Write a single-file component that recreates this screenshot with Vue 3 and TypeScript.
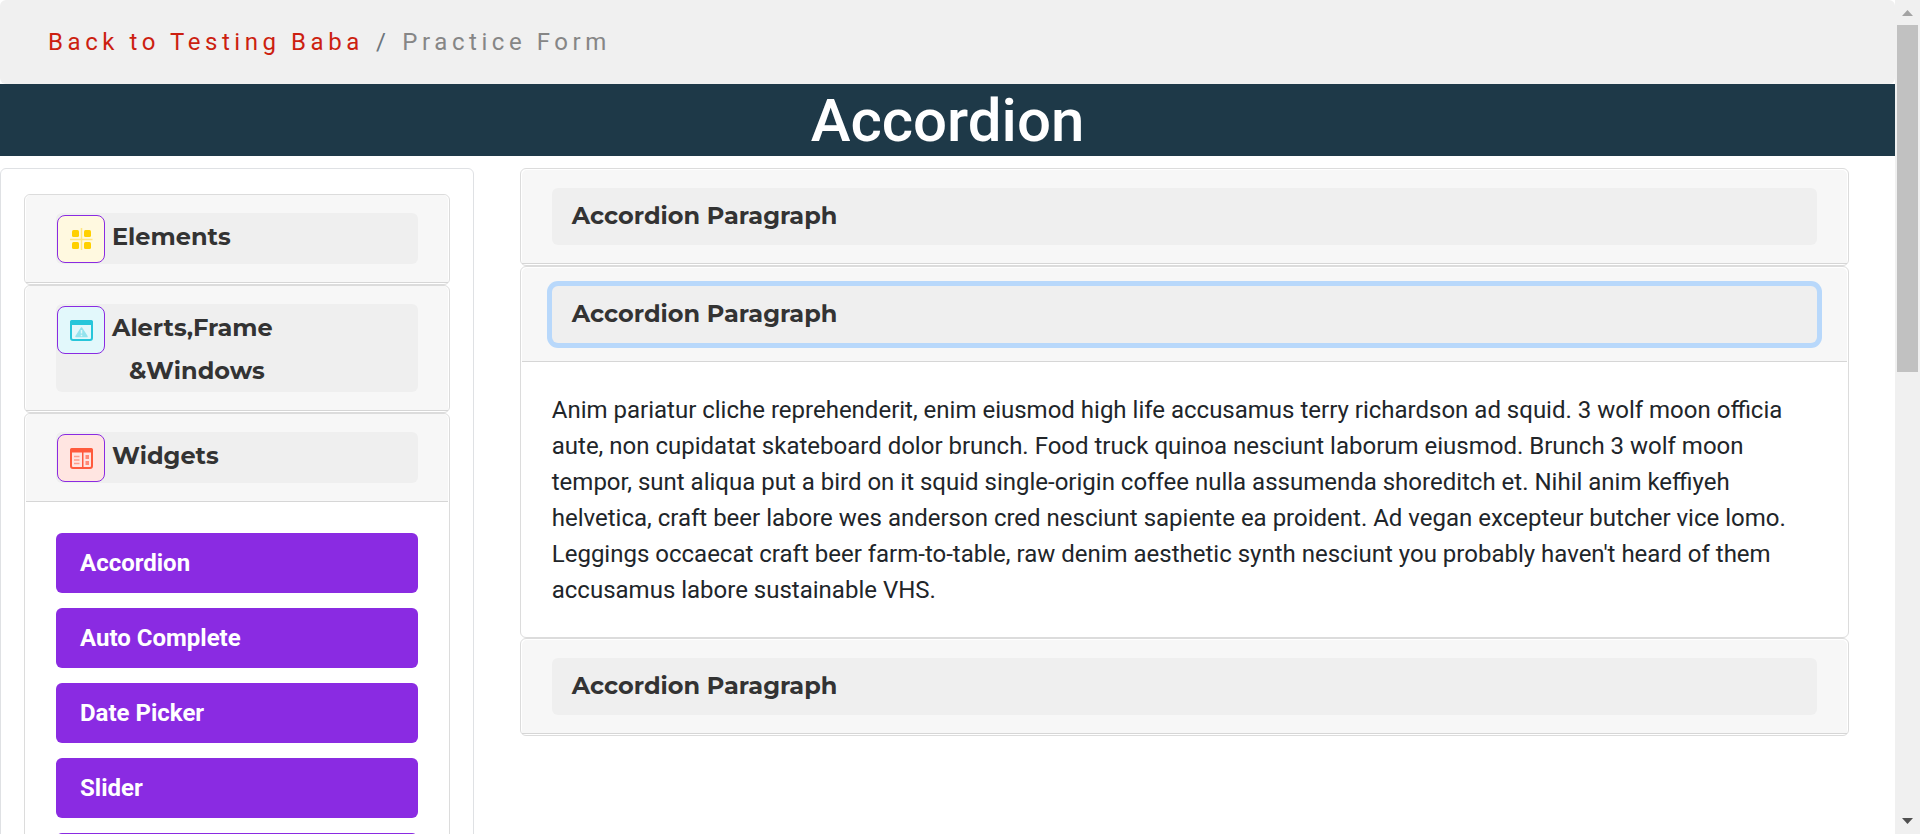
<script setup lang="ts">
import { ref } from 'vue'

interface Group {
  id: string
  lines: string[]
  icon: 'grid' | 'alert' | 'layout'
  links: string[]
}

const groups: Group[] = [
  { id: 'elements', lines: ['Elements'], icon: 'grid', links: [] },
  { id: 'alerts', lines: ['Alerts,Frame', '&Windows'], icon: 'alert', links: [] },
  {
    id: 'widgets',
    lines: ['Widgets'],
    icon: 'layout',
    links: ['Accordion', 'Auto Complete', 'Date Picker', 'Slider', 'Progress Bar'],
  },
]

const paragraph =
  "Anim pariatur cliche reprehenderit, enim eiusmod high life accusamus terry richardson ad squid. 3 wolf moon officia aute, non cupidatat skateboard dolor brunch. Food truck quinoa nesciunt laborum eiusmod. Brunch 3 wolf moon tempor, sunt aliqua put a bird on it squid single-origin coffee nulla assumenda shoreditch et. Nihil anim keffiyeh helvetica, craft beer labore wes anderson cred nesciunt sapiente ea proident. Ad vegan excepteur butcher vice lomo. Leggings occaecat craft beer farm-to-table, raw denim aesthetic synth nesciunt you probably haven't heard of them accusamus labore sustainable VHS."

const sections = [0, 1, 2]
const openSection = ref(1)
const openGroup = ref('widgets')

function toggleSection(n: number): void {
  openSection.value = openSection.value === n ? -1 : n
}
function toggleGroup(id: string): void {
  openGroup.value = openGroup.value === id ? '' : id
}
</script>

<template>
  <div class="shell">
    <div class="page">
      <nav class="crumbs" aria-label="Breadcrumb">
        <a href="#">Back to Testing Baba</a>
        <span class="sep">/</span>
        <span class="here">Practice Form</span>
      </nav>
      <header class="title"><h1>Accordion</h1></header>
      <div class="columns">
        <aside class="sidebar">
          <section v-for="g in groups" :key="g.id" class="card">
            <h2 class="card-head">
              <button
                type="button"
                class="toggle group"
                :aria-expanded="openGroup === g.id"
                @click="toggleGroup(g.id)"
              >
                <span class="tile" :class="g.icon">
                  <svg v-if="g.icon === 'grid'" viewBox="0 0 24 24" aria-hidden="true">
                    <path d="M12.500 1v22M1 12.500h22.500" stroke="#ffe680" stroke-width="1.500" fill="none" />
                    <g fill="#ffd000">
                      <rect x="3" y="3" width="7" height="7" rx="1.500" />
                      <rect x="15" y="3" width="7" height="7" rx="1.500" />
                      <rect x="3" y="15" width="7" height="7" rx="1.500" />
                      <rect x="15" y="15" width="7" height="7" rx="1.500" />
                    </g>
                  </svg>
                  <svg v-else-if="g.icon === 'alert'" viewBox="0 0 24 24" aria-hidden="true">
                    <rect x="2" y="3" width="21" height="19" rx="2" fill="none" stroke="#26c6da" stroke-width="2" />
                    <path d="M1 7V4a2 2 0 0 1 2-2h19a2 2 0 0 1 2 2v3z" fill="#26c6da" />
                    <path d="M12.500 10l5.500 8.500h-11z" fill="#93e3ed" stroke="#93e3ed" stroke-width="1.500" stroke-linejoin="round" />
                    <path d="M12.500 12v3.500M12.500 16.800v1.500" stroke="#e0f7fa" stroke-width="1.500" />
                  </svg>
                  <svg v-else viewBox="0 0 24 24" aria-hidden="true">
                    <rect x="2" y="3" width="21" height="19" rx="2" fill="none" stroke="#ff5a3c" stroke-width="2" />
                    <path d="M1 6.500V4a2 2 0 0 1 2-2h19a2 2 0 0 1 2 2v2.500zM13 6h1.500v16H13z" fill="#ff5a3c" />
                    <path d="M5 10.500h5.500M5 14h5.500M5 17.500h5.500" stroke="#ff9c8a" stroke-width="1.500" />
                    <path d="M16.500 9h3.500v4h-3.500zM16.500 15h3.500v4h-3.500z" fill="#ff8a76" />
                  </svg>
                </span>
                <span class="label">
                  <span v-for="line in g.lines" :key="line">{{ line }}</span>
                </span>
              </button>
            </h2>
            <div v-if="openGroup === g.id && g.links.length" class="links">
              <a v-for="l in g.links" :key="l" href="#">{{ l }}</a>
            </div>
          </section>
        </aside>

        <main class="accordion">
          <section v-for="n in sections" :key="n" class="card">
            <h2 class="card-head">
              <button
                type="button"
                class="toggle"
                :class="{ active: openSection === n }"
                :aria-expanded="openSection === n"
                @click="toggleSection(n)"
              >
                Accordion Paragraph
              </button>
            </h2>
            <p v-if="openSection === n" class="text">{{ paragraph }}</p>
          </section>
        </main>
      </div>
    </div>
    <div class="scrollbar" aria-hidden="true">
      <svg viewBox="0 0 25 25"><path d="M7 16l5.500-6 5.500 6z" fill="#a3a3a3" /></svg>
      <div class="track"><div class="thumb"></div></div>
      <svg viewBox="0 0 25 25"><path d="M7 9l5.500 6 5.500-6z" fill="#505050" /></svg>
    </div>
  </div>
</template>

<style>
html,
body {
  margin: 0;
  background: #fff;
}
</style>

<style scoped>
* {
  box-sizing: border-box;
}
.shell {
  display: flex;
  height: 100vh;
  overflow: hidden;
  font: 400 24px/36px Roboto, 'Liberation Sans', sans-serif;
  color: #212529;
}
.page {
  flex: 1;
  min-width: 0;
  overflow-x: hidden;
  overflow-y: auto;
  scrollbar-width: none;
}
.crumbs {
  display: flex;
  gap: 12px;
  padding: 24px 48px;
  border-radius: 6px;
  background: #f0f0f0;
  letter-spacing: 0.19em;
}
.crumbs a {
  color: #cc1f10;
  text-decoration: none;
}
.sep {
  color: #6c757d;
}
.here {
  color: #868686;
}
.title {
  padding-top: 2px;
  background: #1e3948;
  color: #fff;
  text-align: center;
}
h1 {
  margin: 0;
  font-size: 60px;
  font-weight: 500;
  line-height: 70px;
}
.columns {
  display: grid;
  grid-template-columns: 1fr 3fr;
  margin-top: 12px;
}
.sidebar {
  padding: 25px 23px;
  border: 1px solid #dfe1e4;
  border-radius: 6px;
}
.accordion {
  padding: 0 46px;
}
.card {
  padding: 0 1px 1px;
  border: 1px solid #dcdcdc;
  border-radius: 6px;
  background: #fff;
}
.accordion .card {
  padding-top: 1px;
}
.card-head {
  margin: 0;
  padding: 18px 30px;
  border-bottom: 1px solid #d6d6d6;
  border-radius: 5px 5px 0 0;
  background: #f7f7f7;
}
.toggle {
  display: block;
  width: 100%;
  padding: 10px 20px 11px;
  border: 0;
  border-radius: 6px;
  background: #efefef;
  color: #333;
  font: 700 24px/36px Montserrat, Inter, sans-serif;
  text-align: left;
}
.toggle.active {
  outline: 0;
  box-shadow: 0 0 0 5px #b8d8fb;
}
.toggle.group {
  display: flex;
  align-items: flex-start;
  gap: 6px;
  padding: 0;
  line-height: 43px;
}
.tile {
  display: flex;
  flex: none;
  align-items: center;
  justify-content: center;
  width: 48px;
  height: 48px;
  margin: 2px 1px 1px;
  border: 1px solid #8a2be2;
  border-radius: 8px;
}
.tile svg {
  width: 24px;
  height: 24px;
}
.tile.grid {
  background: #fff9e0;
}
.tile.alert {
  background: #e2f8fb;
}
.tile.layout {
  background: #ffe5e1;
}
.label {
  padding-top: 2px;
}
.label span {
  display: block;
}
.label span + span {
  padding-left: 17px;
}
.links {
  display: flex;
  flex-direction: column;
  gap: 15px;
  padding: 31px 30px 30px;
}
.links a {
  padding: 12px 24px;
  border-radius: 6px;
  background: #8a2be2;
  color: #fff;
  font-weight: 700;
  text-decoration: none;
}
.text {
  margin: 0;
  padding: 30px 30px 28px;
}
.scrollbar {
  display: flex;
  flex: none;
  flex-direction: column;
  width: 25px;
  background: #f0f0f0;
}
.scrollbar svg {
  flex: none;
  width: 25px;
  height: 25px;
}
.track {
  flex: 1;
  padding: 0 2px;
}
.thumb {
  height: 44.3%;
  background: #c1c1c1;
}
</style>
